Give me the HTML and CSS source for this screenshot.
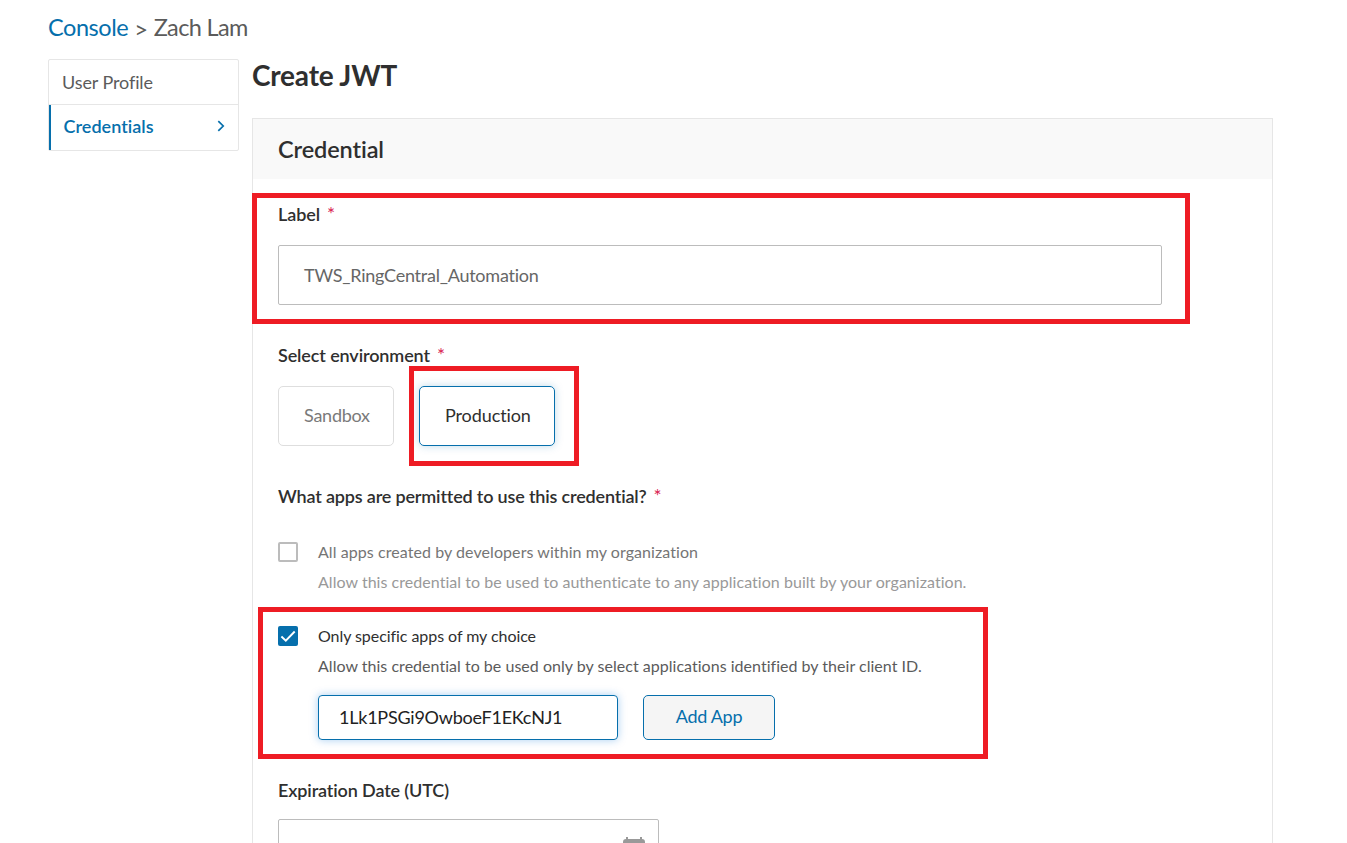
FILE: index.html
```html
<!DOCTYPE html>
<html lang="en">
<head>
<meta charset="utf-8">
<title>Create JWT</title>
<link rel="stylesheet" href="styles.css">
</head>
<body>
<div class="page">
  <nav class="breadcrumb"><a class="crumb-link">Console</a><span class="crumb-sep">&gt;</span><span class="crumb-name">Zach Lam</span></nav>
  <div class="columns">
    <aside class="sidebar">
      <a class="side-item"><span class="side-text">User Profile</span></a>
      <a class="side-item active"><span class="side-text">Credentials</span>
        <svg class="chevron" width="8" height="12" viewBox="0 0 8 12"><path d="M1.3 1.2 6.2 6 1.3 10.8" fill="none" stroke="#066fac" stroke-width="1.7"/></svg>
      </a>
    </aside>
    <main class="main">
      <h1 class="title"><span class="title-text">Create JWT</span></h1>
      <section class="card">
        <h2 class="card-head"><span class="head-text">Credential</span></h2>
        <div class="card-body">
          <div class="field">
            <div class="mark mark-label"></div>
            <div class="label"><span class="label-text t-label">Label</span><span class="star">*</span></div>
            <div class="input input-wide"><span class="value t-value">TWS_RingCentral_Automation</span></div>
          </div>
          <div class="field">
            <div class="label"><span class="label-text t-env">Select environment</span><span class="star">*</span></div>
            <div class="env">
              <div class="env-btn sandbox"><span class="t-sandbox">Sandbox</span></div>
              <div class="env-btn production"><div class="mark mark-env"></div><span class="t-production">Production</span></div>
            </div>
          </div>
          <div class="field">
            <div class="label"><span class="label-text t-apps">What apps are permitted to use this credential?</span><span class="star">*</span></div>
          </div>
          <div class="option muted">
            <span class="box"></span>
            <div class="option-body">
              <div class="line"><span class="t-all">All apps created by developers within my organization</span></div>
              <div class="line desc"><span class="t-alldesc">Allow this credential to be used to authenticate to any application built by your organization.</span></div>
            </div>
          </div>
          <div class="option">
            <div class="mark mark-apps"></div>
            <span class="box checked"><svg width="20" height="20" viewBox="0 0 20 20"><path d="M3.4 10.5 7.8 14.7 16.7 5.5" fill="none" stroke="#fff" stroke-width="1.9"/></svg></span>
            <div class="option-body">
              <div class="line"><span class="t-only">Only specific apps of my choice</span></div>
              <div class="line desc"><span class="t-onlydesc">Allow this credential to be used only by select applications identified by their client ID.</span></div>
              <div class="app-row">
                <div class="app-input"><span class="t-id">1Lk1PSGi9OwboeF1EKcNJ1</span></div>
                <div class="add-btn"><span class="t-add">Add App</span></div>
              </div>
            </div>
          </div>
          <div class="field expiry">
            <div class="label"><span class="label-text t-exp">Expiration Date (UTC)</span></div>
            <div class="input date">
              <svg class="calendar" width="22" height="24" viewBox="0 0 22 24"><path d="M3 2V0h2v2h12V0h2v2q3 0 3 3v17H0V5q0-3 3-3z" fill="#999"/></svg>
            </div>
          </div>
        </div>
      </section>
    </main>
  </div>
</div>
</body>
</html>
```
FILE: styles.css
```css
* { box-sizing: border-box; }
body { margin: 0; background: #fff; color: #2f2f2f; font-family: Lato, sans-serif; font-size: 18px; }
.page { height: 843px; overflow: hidden; padding-left: 48px; white-space: nowrap; }
.breadcrumb { display: flex; height: 59px; padding-top: 12px; line-height: 30px; font-size: 23.5px; letter-spacing: -0.45px; color: #5b5b5b; }
.crumb-link { color: #066fac; }
.crumb-name { letter-spacing: -0.65px; }
.crumb-sep { margin: 2px 6px 0 6px; font-size: 24px; }
.columns { display: flex; align-items: flex-start; gap: 13px; }
.sidebar { width: 191px; border: 1px solid #e6e6e6; border-radius: 2px; }
.side-item { display: flex; align-items: center; justify-content: space-between; height: 44px; padding: 0 13px; color: #5b5b5b; letter-spacing: -0.1px; }
.active { height: 46px; padding: 0 13px 3px 14.5px; border-top: 1px solid #e6e6e6; box-shadow: inset 2px 0 #066fac; color: #066fac; font-weight: 600; letter-spacing: 0.03px; }
.main { width: 1021px; }
.title { display: flex; height: 59px; margin: 0; line-height: 32px; font-size: 28px; font-weight: 700; letter-spacing: -0.2px; }
.card { height: 800px; border: 1px solid #e6e6e6; }
.card-head { display: flex; align-items: center; height: 60px; margin: 0; padding: 0 0 1px 25px; background: #f9f9f9; font-size: 23.5px; font-weight: 600; letter-spacing: -0.1px; }
.card-body { padding: 20px 25px; }
.field { position: relative; margin-bottom: 35px; }
.label { display: flex; height: 30px; line-height: 30px; font-weight: 600; }
.star { margin-left: 7px; color: #d9214f; font-size: 19px; font-weight: 400; }
.input { height: 60px; margin-top: 16px; border: 1px solid #bcbcbc; border-radius: 2px; }
.input-wide { display: flex; align-items: center; width: 884px; padding-left: 25px; color: #666; }
.env { display: flex; gap: 25px; margin-top: 16px; }
.env-btn { position: relative; display: flex; align-items: center; height: 60px; padding: 0 0 2px 25px; border: 1px solid #dedede; border-radius: 5px; }
.sandbox { width: 116px; color: #7a7a7a; }
.production { width: 136px; border-color: #066fac; box-shadow: 0 0 8px rgba(6, 111, 172, .25); }
.option { position: relative; display: flex; gap: 20px; margin: -9px 0 33px; font-size: 16px; }
.muted { color: #757575; }
.box { width: 20px; height: 20px; margin-top: 5px; border: 2px solid #bcbcbc; border-radius: 2px; }
.checked { border: 0; background: #066fac; }
.checked svg { display: block; }
.line { height: 30px; line-height: 30px; }
.desc { color: #5b5b5b; }
.muted .desc { color: #999; }
.app-row { display: flex; gap: 25px; margin-top: 14px; font-size: 18px; }
.app-input { display: flex; align-items: center; width: 300px; height: 45px; padding: 0 0 2px 20px; border: 1px solid #066fac; border-radius: 4px; box-shadow: 0 0 9px rgba(0, 115, 215, .35); color: #222; }
.add-btn { display: flex; align-items: center; justify-content: center; width: 132px; height: 45px; padding-bottom: 3px; border: 1px solid #066fac; border-radius: 5px; background: #f5f5f5; color: #066fac; }
.expiry { margin-top: 35px; }
.date { display: flex; justify-content: flex-end; width: 381px; margin-top: 14px; padding: 17px 13px 0 0; }
/* Tracking per text run */
.t-label { letter-spacing: -0.1px; }
.t-value { letter-spacing: -0.24px; }
.t-env { letter-spacing: -0.12px; }
.t-sandbox { letter-spacing: -0.25px; }
.t-production { letter-spacing: -0.1px; }
.t-apps { letter-spacing: -0.17px; }
.t-all { letter-spacing: 0.07px; }
.t-alldesc { letter-spacing: 0.04px; }
.t-only { letter-spacing: -0.06px; }
.t-onlydesc { letter-spacing: 0.025px; }
.t-id { letter-spacing: -0.23px; }
.t-add { letter-spacing: -0.3px; }
.t-exp { letter-spacing: -0.13px; }
/* Red outlines drawn over the form */
.mark { position: absolute; z-index: 2; border: 5px solid #ee1c24; pointer-events: none; }
.mark-label { left: -26px; top: -6px; width: 938px; height: 131px; }
.mark-env { left: -11px; top: -21px; width: 170px; height: 100px; }
.mark-apps { left: -20px; top: -14px; width: 730px; height: 152px; }
```
